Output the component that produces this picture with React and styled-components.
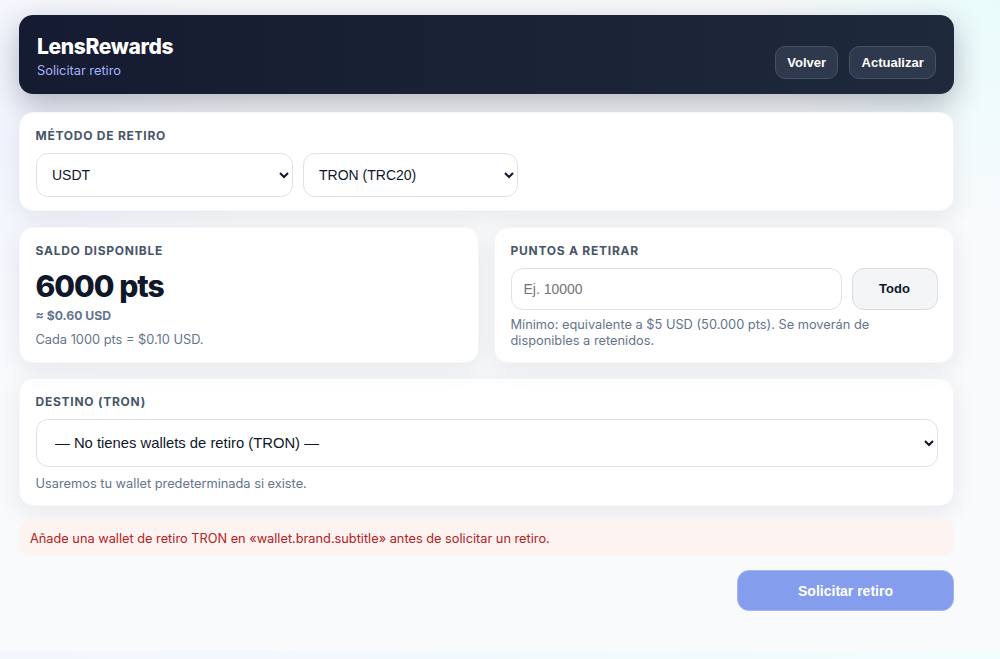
import React from 'react';
import styled, { createGlobalStyle } from 'styled-components';

const GlobalStyle = createGlobalStyle`
  html, body {
    margin: 0;
    padding: 0;
    background: linear-gradient(90deg, #f4f6fe, #f0fdfd);
  }
  * {
    box-sizing: border-box;
  }
`;

const Page = styled.div`
  height: 651px;
  padding: 15px 46px 0 19px;
  font-family: Inter, "Liberation Sans", sans-serif;
  color: #0f172a;
  background:
    radial-gradient(circle at 100% 0%, #e9fcfc 0, rgba(233, 252, 252, 0) 240px),
    radial-gradient(circle at 0% 20%, #f1f4fe 0, rgba(241, 244, 254, 0) 260px),
    #f9fafc;
`;

const Header = styled.header`
  height: 79px;
  padding: 0 18px;
  margin-bottom: 18px;
  display: flex;
  justify-content: space-between;
  border-radius: 14px;
  background: linear-gradient(90deg, #151b30, #1e293b);
  box-shadow: 0 10px 30px rgba(15, 23, 42, 0.3);
`;

const Brand = styled.div`
  padding-top: 20px;
`;

const Title = styled.div`
  font-size: 21px;
  line-height: 23px;
  font-weight: 800;
  letter-spacing: -0.35px;
  color: #fff;
`;

const Subtitle = styled.div`
  margin-top: 5px;
  font-size: 12.8px;
  line-height: 16px;
  color: #a5b4fc;
`;

const HeaderActions = styled.div`
  display: flex;
  gap: 11px;
  padding-top: 30.5px;
`;

const HeaderButton = styled.button`
  height: 33px;
  padding: 0 11.25px;
  border: 1px solid #475069;
  border-radius: 10px;
  background: #2f394d;
  color: #fff;
  font-family: "Liberation Sans", Arial, sans-serif;
  font-size: 13px;
  font-weight: 700;
`;

const Card = styled.section`
  padding: 16px 15.5px 13px;
  border: 1px solid #f6f7fa;
  border-radius: 14px;
  background: #fff;
  box-shadow: 0 6px 24px rgba(15, 23, 42, 0.08);
`;

const Label = styled.div`
  padding-bottom: 1px;
  font-size: 12px;
  line-height: 14px;
  font-weight: 700;
  letter-spacing: 0.75px;
  text-transform: uppercase;
  color: #475569;
`;

const SelectRow = styled.div`
  display: flex;
  gap: 10px;
  margin-top: 9px;
`;

const Select = styled.select`
  width: ${p => p.$width};
  height: ${p => p.$height};
  padding: 0 ${p => p.$pad || '11.5px'};
  border: 1px solid #dfe1e6;
  border-radius: 12px;
  background-color: #fff;
  color: #0f172a;
  font-family: "Liberation Sans", Arial, sans-serif;
  font-size: ${p => p.$size || '14px'};
`;

const Columns = styled.div`
  display: grid;
  grid-template-columns: 460px 460px;
  gap: 15px;
  margin: 16px 0 15px;
`;

const Points = styled.div`
  margin-top: 7px;
  font-size: 30px;
  line-height: 40px;
  font-weight: 800;
  letter-spacing: -1px;
  color: #0f172a;
`;

const Usd = styled.div`
  margin-top: 2px;
  font-size: 12.2px;
  line-height: 16px;
  font-weight: 700;
  color: #64748b;
`;

const Hint = styled.div`
  margin-top: ${p => p.$top};
  max-width: ${p => p.$maxWidth || 'none'};
  font-size: 12.8px;
  line-height: 16px;
  color: #64748b;
`;

const AmountRow = styled.div`
  display: flex;
  gap: 10px;
  margin-top: 9px;
`;

const AmountInput = styled.input`
  flex: 1;
  min-width: 0;
  height: 41.5px;
  padding: 0 12px;
  border: 1px solid #dfe1e6;
  border-radius: 12px;
  font-family: "Liberation Sans", Arial, sans-serif;
  font-size: 14px;
  &::placeholder {
    color: #757575;
  }
`;

const AllButton = styled.button`
  width: 86px;
  height: 41.5px;
  border: 1px solid #d9dbe0;
  border-radius: 12px;
  background: #f4f5f7;
  color: #0f172a;
  font-family: "Liberation Sans", Arial, sans-serif;
  font-size: 13px;
  font-weight: 700;
`;

const Alert = styled.div`
  height: 36px;
  margin-top: 14.5px;
  padding: 0 11px;
  display: flex;
  align-items: center;
  border-radius: 10px;
  background: #fdf3f1;
  color: #b42222;
  font-size: 12.77px;
`;

const Actions = styled.div`
  display: flex;
  justify-content: flex-end;
  margin-top: 14px;
`;

const SubmitButton = styled.button`
  width: 217px;
  height: 41px;
  border: 1px solid #a5b6f2;
  border-radius: 12px;
  background: #859ded;
  color: #fff;
  font-family: "Liberation Sans", Arial, sans-serif;
  font-size: 14px;
  font-weight: 700;
`;

export default function App() {
  return (
    <Page>
      <GlobalStyle />
      <Header>
        <Brand>
          <Title>LensRewards</Title>
          <Subtitle>Solicitar retiro</Subtitle>
        </Brand>
        <HeaderActions>
          <HeaderButton>Volver</HeaderButton>
          <HeaderButton>Actualizar</HeaderButton>
        </HeaderActions>
      </Header>

      <Card>
        <Label>Método de retiro</Label>
        <SelectRow>
          <Select $width="257px" $height="44px" defaultValue="USDT">
            <option>USDT</option>
          </Select>
          <Select $width="215px" $height="44px" defaultValue="TRON (TRC20)">
            <option>TRON (TRC20)</option>
          </Select>
        </SelectRow>
      </Card>

      <Columns>
        <Card>
          <Label>Saldo disponible</Label>
          <Points>6000 pts</Points>
          <Usd>≈ $0.60 USD</Usd>
          <Hint $top="8px">Cada 1000 pts = $0.10 USD.</Hint>
        </Card>
        <Card>
          <Label>Puntos a retirar</Label>
          <AmountRow>
            <AmountInput placeholder="Ej. 10000" />
            <AllButton>Todo</AllButton>
          </AmountRow>
          <Hint $top="7.5px" $maxWidth="400px">Mínimo: equivalente a $5 USD (50.000 pts). Se moverán de disponibles a retenidos.</Hint>
        </Card>
      </Columns>

      <Card>
        <Label>Destino (TRON)</Label>
        <SelectRow>
          <Select $width="100%" $height="48px" $pad="14.5px" $size="14.8px">
            <option>— No tienes wallets de retiro (TRON) —</option>
          </Select>
        </SelectRow>
        <Hint $top="8.5px">Usaremos tu wallet predeterminada si existe.</Hint>
      </Card>

      <Alert>Añade una wallet de retiro TRON en «wallet.brand.subtitle» antes de solicitar un retiro.</Alert>

      <Actions>
        <SubmitButton disabled>Solicitar retiro</SubmitButton>
      </Actions>
    </Page>
  );
}
